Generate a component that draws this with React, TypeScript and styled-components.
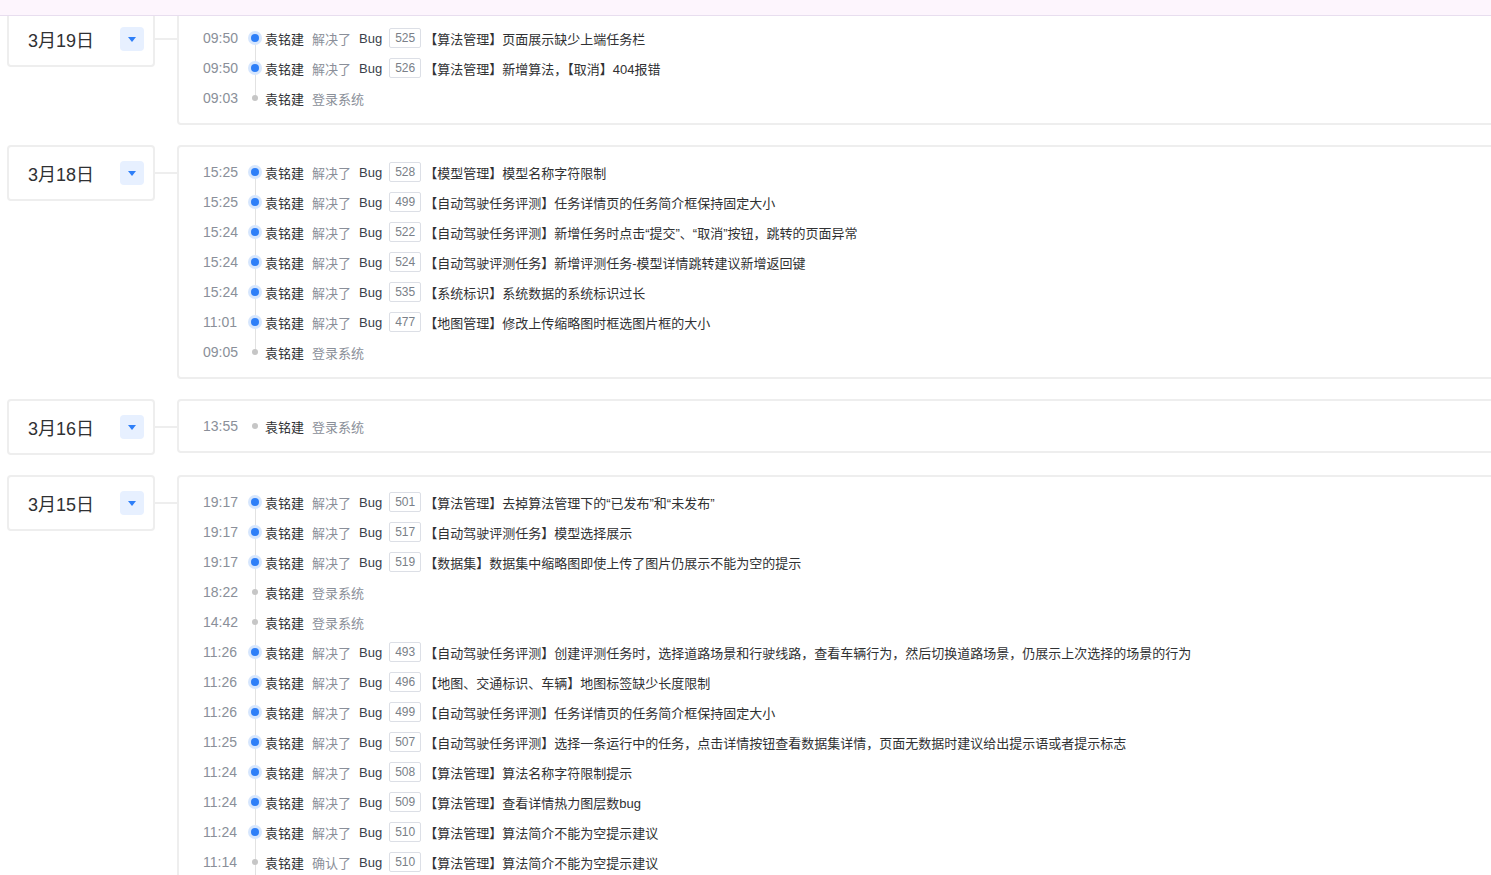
import React from "react";
import styled, { createGlobalStyle } from "styled-components";

type Entry = {
  time: string;
  action?: string;
  bug?: string;
  title?: string;
  active?: boolean;
};

type Group = { date: string; entries: Entry[] };

const U = "袁铭建";

const fix = (time: string, bug: string, title: string): Entry => ({
  time,
  action: "解决了",
  bug,
  title,
  active: true,
});
const login = (time: string): Entry => ({ time, action: "登录系统" });

const groups: Group[] = [
  {
    date: "3月19日",
    entries: [
      fix("09:50", "525", "【算法管理】页面展示缺少上端任务栏"),
      fix("09:50", "526", "【算法管理】新增算法，【取消】404报错"),
      login("09:03"),
    ],
  },
  {
    date: "3月18日",
    entries: [
      fix("15:25", "528", "【模型管理】模型名称字符限制"),
      fix("15:25", "499", "【自动驾驶任务评测】任务详情页的任务简介框保持固定大小"),
      fix("15:24", "522", "【自动驾驶任务评测】新增任务时点击“提交”、“取消”按钮，跳转的页面异常"),
      fix("15:24", "524", "【自动驾驶评测任务】新增评测任务-模型详情跳转建议新增返回键"),
      fix("15:24", "535", "【系统标识】系统数据的系统标识过长"),
      fix("11:01", "477", "【地图管理】修改上传缩略图时框选图片框的大小"),
      login("09:05"),
    ],
  },
  {
    date: "3月16日",
    entries: [login("13:55")],
  },
  {
    date: "3月15日",
    entries: [
      fix("19:17", "501", "【算法管理】去掉算法管理下的“已发布”和“未发布”"),
      fix("19:17", "517", "【自动驾驶评测任务】模型选择展示"),
      fix("19:17", "519", "【数据集】数据集中缩略图即使上传了图片仍展示不能为空的提示"),
      login("18:22"),
      login("14:42"),
      fix(
        "11:26",
        "493",
        "【自动驾驶任务评测】创建评测任务时，选择道路场景和行驶线路，查看车辆行为，然后切换道路场景，仍展示上次选择的场景的行为"
      ),
      fix("11:26", "496", "【地图、交通标识、车辆】地图标签缺少长度限制"),
      fix("11:26", "499", "【自动驾驶任务评测】任务详情页的任务简介框保持固定大小"),
      fix(
        "11:25",
        "507",
        "【自动驾驶任务评测】选择一条运行中的任务，点击详情按钮查看数据集详情，页面无数据时建议给出提示语或者提示标志"
      ),
      fix("11:24", "508", "【算法管理】算法名称字符限制提示"),
      fix("11:24", "509", "【算法管理】查看详情热力图层数bug"),
      fix("11:24", "510", "【算法管理】算法简介不能为空提示建议"),
      { time: "11:14", action: "确认了", bug: "510", title: "【算法管理】算法简介不能为空提示建议" },
      fix("11:10", "511", "【算法管理】算法列表分页显示异常"),
      login("09:02"),
    ],
  },
];

const GlobalStyle = createGlobalStyle`
  html, body {
    margin: 0;
    padding: 0;
    background: #ffffff;
    overflow: hidden;
  }
  body {
    font-family: "Liberation Sans", "Noto Sans CJK SC", Arial, sans-serif;
    color: #333333;
  }
`;

const TopBar = styled.div`
  position: fixed;
  top: 0;
  left: 0;
  right: 0;
  height: 16px;
  box-sizing: border-box;
  background: #fdf5fd;
  border-bottom: 1px solid #e8deef;
  z-index: 10;
`;

const Feed = styled.div`
  width: 1520px;
  padding: 11px 0 0 7px;
  display: flex;
  flex-direction: column;
  gap: 20px;
`;

const GroupRow = styled.section`
  display: flex;
  align-items: flex-start;
`;

const DateCard = styled.div`
  width: 148px;
  height: 56px;
  box-sizing: border-box;
  border: 2px solid #eeeeee;
  border-radius: 4px;
  display: flex;
  align-items: center;
  justify-content: space-between;
  padding: 0 9px 0 19px;
  flex-shrink: 0;
  background: #fff;
`;

const DateText = styled.span`
  font-size: 18px;
  color: #303133;
`;

const DropButton = styled.span`
  width: 24px;
  height: 24px;
  border-radius: 4px;
  background: #e7f0ff;
  display: flex;
  align-items: center;
  justify-content: center;
`;

const Connector = styled.div`
  width: 22px;
  height: 2px;
  margin-top: 27px;
  background: #eeeeee;
  flex-shrink: 0;
`;

const LogBox = styled.div`
  flex: 1;
  box-sizing: border-box;
  border: 2px solid #eeeeee;
  border-radius: 4px;
  padding: 10px 0 10px 24px;
  display: flex;
  flex-direction: column;
`;

const Row = styled.div`
  height: 30px;
  display: flex;
  align-items: center;
  white-space: nowrap;
`;

const Time = styled.span`
  width: 42px;
  font-size: 14px;
  color: #8a8f99;
  flex-shrink: 0;
`;

const DotCell = styled.span<{ $first: boolean; $last: boolean }>`
  position: relative;
  width: 20px;
  height: 30px;
  flex-shrink: 0;
  display: flex;
  align-items: center;
  justify-content: center;

  &::before,
  &::after {
    content: "";
    position: absolute;
    left: 9.5px;
    width: 1px;
    background: #e2e2e2;
  }
  &::before {
    top: 0;
    height: 15px;
    display: ${(p) => (p.$first ? "none" : "block")};
  }
  &::after {
    top: 15px;
    height: 15px;
    display: ${(p) => (p.$last ? "none" : "block")};
  }
`;

const Dot = styled.span<{ $active: boolean }>`
  position: relative;
  z-index: 1;
  border-radius: 50%;
  width: ${(p) => (p.$active ? "8px" : "6px")};
  height: ${(p) => (p.$active ? "8px" : "6px")};
  background: ${(p) => (p.$active ? "#2e7ff8" : "#c6c6c6")};
  box-shadow: ${(p) => (p.$active ? "0 0 0 3px #d6e6fd" : "none")};
`;

const Content = styled.span`
  display: flex;
  align-items: center;
  gap: 8px;
  font-size: 13px;
`;

const Name = styled.span`
  color: #303133;
`;

const Action = styled.span`
  color: #8a8f99;
`;

const BugLabel = styled.span`
  color: #3a3f4a;
`;

const Badge = styled.span`
  display: inline-flex;
  align-items: center;
  justify-content: center;
  height: 20px;
  box-sizing: border-box;
  padding: 0 5px;
  border: 1px solid #dcdfe6;
  border-radius: 2px;
  font-size: 12px;
  color: #7a7f88;
  margin-left: -1px;
`;

const Title = styled.span`
  color: #303133;
  margin-left: -5px;
`;

const Caret = () => (
  <svg width="8" height="5" viewBox="0 0 8 5">
    <path d="M0 0 L8 0 L4 5 Z" fill="#2e7ff8" />
  </svg>
);

export default function App() {
  return (
    <>
      <GlobalStyle />
      <TopBar />
      <Feed>
        {groups.map((g) => (
          <GroupRow key={g.date}>
            <DateCard>
              <DateText>{g.date}</DateText>
              <DropButton>
                <Caret />
              </DropButton>
            </DateCard>
            <Connector />
            <LogBox>
              {g.entries.map((e, i) => (
                <Row key={i}>
                  <Time>{e.time}</Time>
                  <DotCell $first={i === 0} $last={i === g.entries.length - 1}>
                    <Dot $active={!!e.active} />
                  </DotCell>
                  <Content>
                    <Name>{U}</Name>
                    <Action>{e.action}</Action>
                    {e.bug && <BugLabel>Bug</BugLabel>}
                    {e.bug && <Badge>{e.bug}</Badge>}
                    {e.title && <Title>{e.title}</Title>}
                  </Content>
                </Row>
              ))}
            </LogBox>
          </GroupRow>
        ))}
      </Feed>
    </>
  );
}
